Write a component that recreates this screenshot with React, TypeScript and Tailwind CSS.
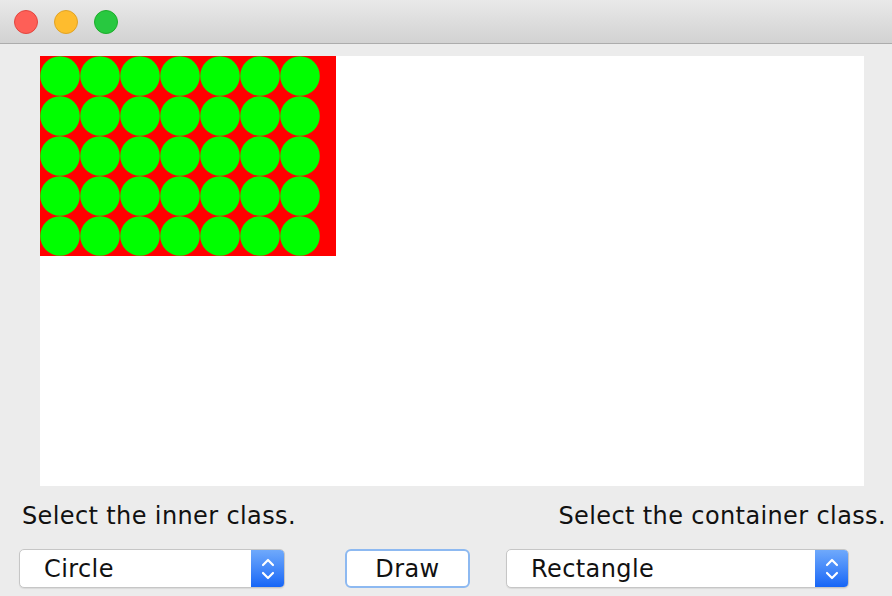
import React from "react";

const font = { fontFamily: '"DejaVu Sans", "Liberation Sans", sans-serif' };

function Chevrons() {
  return (
    <svg width="14" height="24" viewBox="0 0 14 24" fill="none" stroke="white" strokeWidth="2.2" strokeLinecap="round" strokeLinejoin="round">
      <path d="M2 8 L7 3 L12 8" />
      <path d="M2 16 L7 21 L12 16" />
    </svg>
  );
}

function Combo({ label, width }: { label: string; width: string }) {
  return (
    <div className={`flex h-[39px] ${width} rounded-[5px] border border-[#c6c6c6] bg-white shadow-[0_1px_1px_rgba(0,0,0,0.08)] overflow-hidden`}>
      <div className="flex-1 flex items-center pl-[24px] text-[24px] tracking-[0.4px] text-[#111]">{label}</div>
      <div className="w-[33px] flex items-center justify-center bg-gradient-to-b from-[#6fa9fb] to-[#1565f6]">
        <Chevrons />
      </div>
    </div>
  );
}

export default function App() {
  const cols = 7;
  const rows = 5;
  const circles = [];
  for (let r = 0; r < rows; r++) {
    for (let c = 0; c < cols; c++) {
      circles.push(<circle key={`${r}-${c}`} cx={20 + 40 * c} cy={20 + 40 * r} r={19.8} fill="#00ff00" />);
    }
  }
  return (
    <div className="w-[892px] h-[596px] bg-[#ececec] overflow-hidden flex flex-col" style={font}>
      <div className="h-[44px] shrink-0 bg-gradient-to-b from-[#e9e9e9] to-[#d2d2d2] border-b border-[#acacac] flex items-center pl-[14px] gap-[16px]">
        <div className="w-[24px] h-[24px] rounded-full bg-[#fe5f57] border border-[#e2463f]" />
        <div className="w-[24px] h-[24px] rounded-full bg-[#febc2e] border border-[#e1a325]" />
        <div className="w-[24px] h-[24px] rounded-full bg-[#28c840] border border-[#1dad2b]" />
      </div>
      <div className="ml-[40px] mt-[12px] w-[824px] h-[430px] bg-white shrink-0">
        <svg width="296" height="200" viewBox="0 0 296 200" className="block">
          <rect width="296" height="200" fill="#ff0000" />
          {circles}
        </svg>
      </div>
      <div className="flex justify-between pl-[22px] pr-[6px] mt-[14px] text-[24px] leading-[32px] tracking-[0.38px] text-[#111]">
        <span>Select the inner class.</span>
        <span>Select the container class.</span>
      </div>
      <div className="flex items-center mt-[17px] pl-[19px]">
        <Combo label="Circle" width="w-[266px]" />
        <div className="ml-[60px] w-[125px] h-[39px] rounded-[6px] border-2 border-[#8db9f1] bg-white flex items-center justify-center text-[24px] tracking-[0.4px] text-[#111]">
          Draw
        </div>
        <div className="ml-[36px]">
          <Combo label="Rectangle" width="w-[343px]" />
        </div>
      </div>
    </div>
  );
}
